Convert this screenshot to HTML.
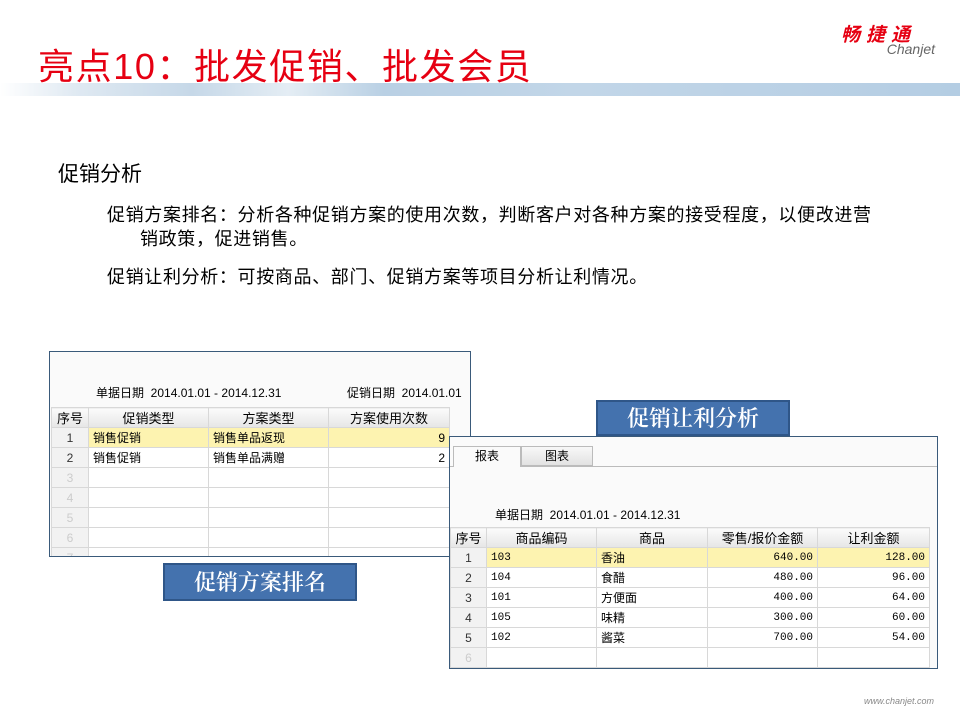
<!DOCTYPE html>
<html><head><meta charset="utf-8"><style>
*{margin:0;padding:0;box-sizing:border-box}
body{width:960px;height:720px;background:#fff;position:relative;overflow:hidden;font-family:"Liberation Sans","Noto Sans CJK SC",sans-serif;color:#000}
.a{position:absolute;white-space:nowrap}
.band{position:absolute;left:0;top:83px;width:960px;height:13px;background:linear-gradient(90deg,#fff 0%,#dfe9f2 8%,#c6d8e8 20%,#e4edf4 30%,#b9d0e4 40%,#c2d6e8 60%,#b4cde3 100%)}
table{border-collapse:collapse;font-size:12px;table-layout:fixed}
td,th{height:20px;border:1px solid #d8d8d8;padding:0 4px;font-weight:normal;white-space:nowrap;overflow:hidden}
th{background:linear-gradient(#fbfbfb,#e6e6e6);text-align:center;font-size:13px}
td.n{text-align:center;background:#f2f2f2;color:#333}
td.g{color:#ccc}
td.r{text-align:right;font-family:"Liberation Mono",monospace;font-size:11px}
tr.y td{background:#fdf3b0}
tr.y td.n{background:#f2f2f2}
.box{position:absolute;border:1px solid #3a5a7a;background:#fafafa;overflow:hidden}
.lbl{position:absolute;background:#4472ae;border:2px solid #2f5688;color:#fff;font-family:"Noto Serif CJK SC",serif;font-size:22px;font-weight:600;text-align:center}
</style></head><body>
<div class="a" style="left:38px;top:38px;font-size:36px;color:#e60012;letter-spacing:1.6px">亮点10：批发促销、批发会员</div>
<div class="a" style="left:841px;top:20px;font-size:19px;color:#e60012;font-weight:bold;font-style:italic;letter-spacing:6px">畅捷通</div>
<div class="a" style="right:25px;top:41px;font-size:14px;color:#666;font-style:italic">Chanjet</div>
<div class="band"></div>

<div class="a" style="left:58px;top:158px;font-size:21px">促销分析</div>
<div class="a" style="left:107px;top:201px;font-size:18px;letter-spacing:0.65px">促销方案排名：分析各种促销方案的使用次数，判断客户对各种方案的接受程度，以便改进营</div>
<div class="a" style="left:140px;top:225px;font-size:18px;letter-spacing:0.65px">销政策，促进销售。</div>
<div class="a" style="left:107px;top:263px;font-size:18px;letter-spacing:0.65px">促销让利分析：可按商品、部门、促销方案等项目分析让利情况。</div>

<div class="box" style="left:49px;top:351px;width:422px;height:206px">
 <div class="a" style="left:46px;top:32px;font-size:12px">单据日期&nbsp;&nbsp;2014.01.01 - 2014.12.31</div>
 <div class="a" style="left:297px;top:32px;font-size:12px">促销日期&nbsp;&nbsp;2014.01.01</div>
 <table style="position:absolute;left:1px;top:55px;width:398px;background:#fff">
  <colgroup><col style="width:37px"><col style="width:120px"><col style="width:120px"><col style="width:121px"></colgroup>
  <tr><th>序号</th><th>促销类型</th><th>方案类型</th><th>方案使用次数</th></tr>
  <tr class="y"><td class="n">1</td><td>销售促销</td><td>销售单品返现</td><td style="text-align:right">9</td></tr>
  <tr><td class="n">2</td><td>销售促销</td><td>销售单品满赠</td><td style="text-align:right">2</td></tr>
  <tr><td class="n g">3</td><td></td><td></td><td></td></tr>
  <tr><td class="n g">4</td><td></td><td></td><td></td></tr>
  <tr><td class="n g">5</td><td></td><td></td><td></td></tr>
  <tr><td class="n g">6</td><td></td><td></td><td></td></tr>
  <tr><td class="n g">7</td><td></td><td></td><td></td></tr>
 </table>
</div>
<div class="lbl" style="left:163px;top:563px;width:194px;height:38px;line-height:33px">促销方案排名</div>

<div class="lbl" style="left:596px;top:400px;width:194px;height:36px;line-height:31px">促销让利分析</div>
<div class="box" style="left:449px;top:436px;width:489px;height:233px">
 <div style="position:absolute;left:0;top:29px;width:489px;border-top:1px solid #bbb"></div>
 <div class="a" style="left:3px;top:9px;width:68px;height:21px;border:1px solid #bbb;border-bottom:none;background:#fafafa;text-align:center;font-size:12px;line-height:19px">报表</div>
 <div class="a" style="left:71px;top:9px;width:72px;height:20px;border:1px solid #bbb;background:linear-gradient(#f8f8f8,#e2e2e2);text-align:center;font-size:12px;line-height:18px">图表</div>
 <div class="a" style="left:45px;top:69px;font-size:12px">单据日期&nbsp;&nbsp;2014.01.01 - 2014.12.31</div>
 <table style="position:absolute;left:0;top:90px;width:479px;background:#fff">
  <colgroup><col style="width:36px"><col style="width:110px"><col style="width:111px"><col style="width:110px"><col style="width:112px"></colgroup>
  <tr><th>序号</th><th>商品编码</th><th>商品</th><th>零售/报价金额</th><th>让利金额</th></tr>
  <tr class="y"><td class="n">1</td><td class="r" style="text-align:left">103</td><td>香油</td><td class="r">640.00</td><td class="r">128.00</td></tr>
  <tr><td class="n">2</td><td class="r" style="text-align:left">104</td><td>食醋</td><td class="r">480.00</td><td class="r">96.00</td></tr>
  <tr><td class="n">3</td><td class="r" style="text-align:left">101</td><td>方便面</td><td class="r">400.00</td><td class="r">64.00</td></tr>
  <tr><td class="n">4</td><td class="r" style="text-align:left">105</td><td>味精</td><td class="r">300.00</td><td class="r">60.00</td></tr>
  <tr><td class="n">5</td><td class="r" style="text-align:left">102</td><td>酱菜</td><td class="r">700.00</td><td class="r">54.00</td></tr>
  <tr><td class="n g">6</td><td></td><td></td><td></td><td></td></tr>
 </table>
</div>
<div class="a" style="left:864px;top:696px;font-size:9px;color:#888;font-style:italic">www.chanjet.com</div>
</body></html>
